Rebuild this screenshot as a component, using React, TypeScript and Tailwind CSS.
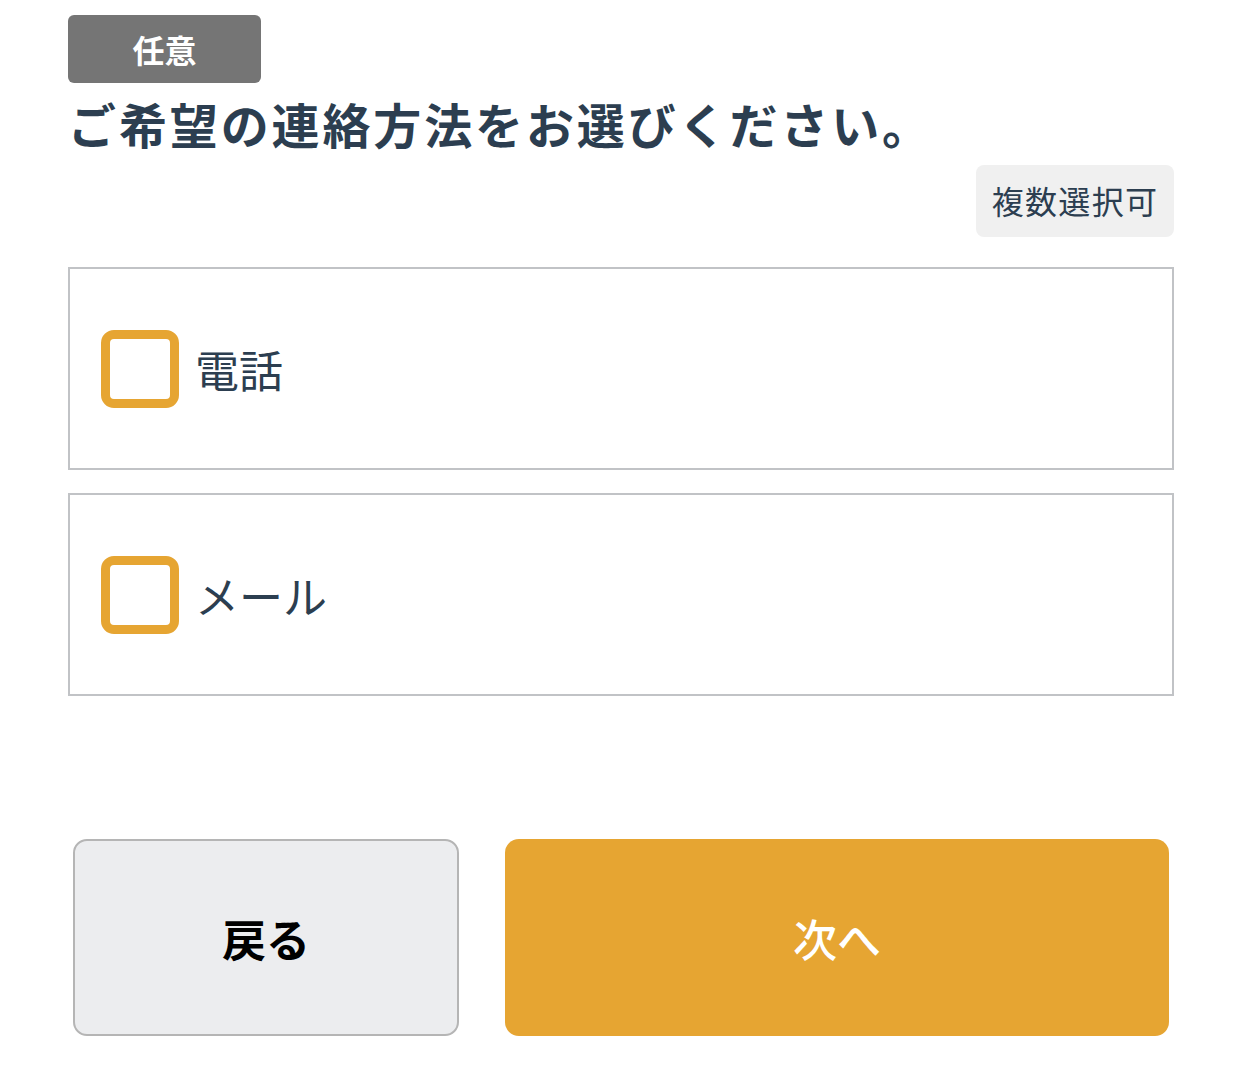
import React from "react";

const font = { fontFamily: '"Noto Sans CJK JP", "Noto Sans", sans-serif' };

function Option({ label }: { label: string }) {
  return (
    <label className="flex h-[203px] items-center border-2 border-[#c1c3c6] bg-white pl-[31px]">
      <span className="box-border block h-[78px] w-[78px] rounded-[13px] border-[9px] border-[#e6a532] bg-white" />
      <span className="ml-[16px] text-[44px] leading-none text-[#2c3e50]">{label}</span>
    </label>
  );
}

export default function App() {
  return (
    <div className="min-h-[1068px] w-full bg-white" style={font}>
      <div className="px-[68px] pt-[15px]">
        <div className="flex h-[68px] w-[193px] items-center justify-center rounded-[6px] bg-[#757575] text-[32px] font-bold leading-none text-white">
          任意
        </div>
        <h1 className="mt-[11px] text-[48px] font-bold leading-[58px] tracking-[0.06em] text-[#2c3e50]">
          ご希望の連絡方法をお選びください。
        </h1>
        <div className="mt-[13px] flex justify-end">
          <div className="flex h-[72px] w-[198px] items-center justify-center rounded-[8px] bg-[#f0f0f0] pb-[2px] text-[32px] leading-none tracking-[0.04em] text-[#2c3e50]">
            複数選択可
          </div>
        </div>
        <div className="mt-[30px] flex flex-col gap-[23px]">
          <Option label="電話" />
          <Option label="メール" />
        </div>
        <div className="mt-[143px] flex gap-[46px] pl-[5px] pr-[5px]">
          <button className="flex h-[197px] w-[386px] items-center justify-center rounded-[14px] border-2 border-[#b5b5b5] bg-[#ecedef] text-[44px] font-bold leading-none text-black">
            戻る
          </button>
          <button className="flex h-[197px] flex-1 items-center justify-center rounded-[14px] bg-[#e6a532] text-[44px] font-medium leading-none text-white">
            次へ
          </button>
        </div>
      </div>
    </div>
  );
}
